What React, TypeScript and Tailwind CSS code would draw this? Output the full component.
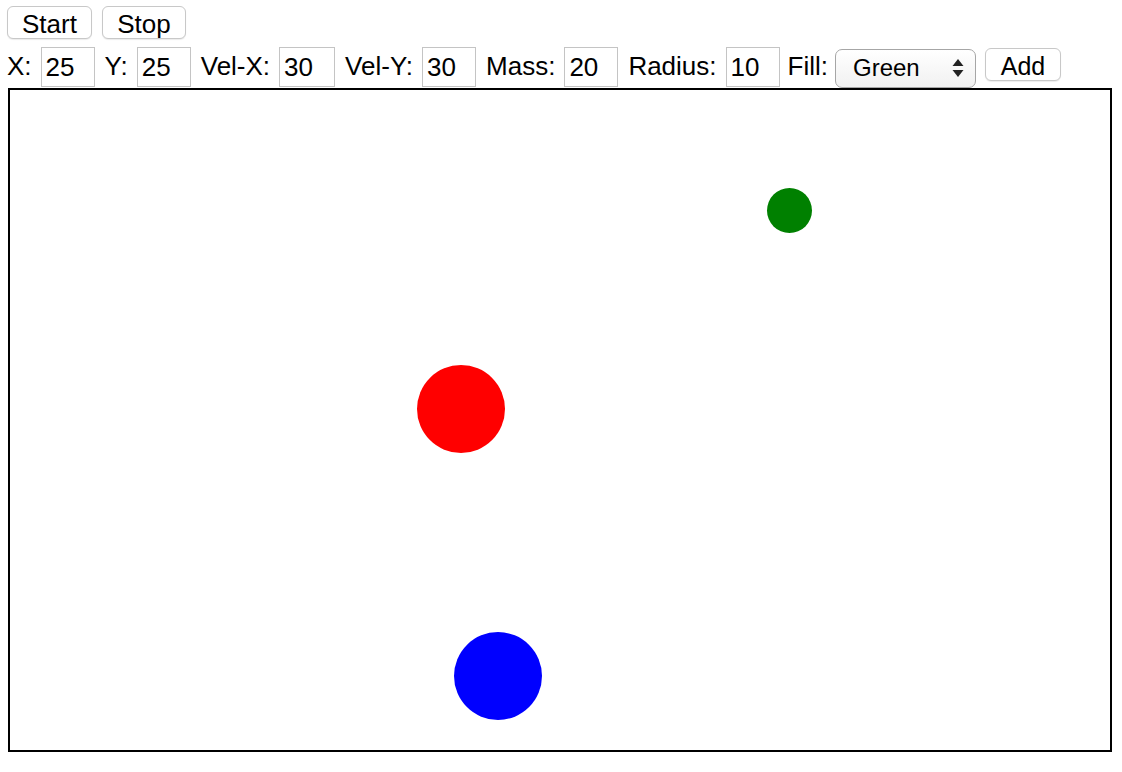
import React, { useState } from "react";

interface Ball {
  id: number;
  left: number;
  top: number;
  size: number;
  color: string;
}

const balls: Ball[] = [
  { id: 1, left: 757, top: 98, size: 45, color: "#008000" },
  { id: 2, left: 407, top: 275, size: 88, color: "#ff0000" },
  { id: 3, left: 444, top: 542, size: 88, color: "#0000ff" },
];

const fields = [
  { label: "X:", value: "25", width: "w-[54px]" },
  { label: "Y:", value: "25", width: "w-[54px]" },
  { label: "Vel-X:", value: "30", width: "w-[56px]" },
  { label: "Vel-Y:", value: "30", width: "w-[54px]" },
  { label: "Mass:", value: "20", width: "w-[54px]" },
  { label: "Radius:", value: "10", width: "w-[54px]" },
];

export default function App() {
  const [fill, setFill] = useState("Green");

  return (
    <div className="min-h-screen bg-white text-black font-['Liberation_Sans',Arial,sans-serif] text-[26px]">
      {/* Controls */}
      <div className="flex gap-[10px] pl-[7px] pt-[6px]">
        <button className="w-[85px] h-[33px] pt-[3px] rounded-[6px] border border-[#c8c8c8] bg-white leading-none shadow-[0_1px_1px_rgba(0,0,0,0.08)]">
          Start
        </button>
        <button className="w-[84px] h-[33px] pt-[3px] rounded-[6px] border border-[#c8c8c8] bg-white leading-none shadow-[0_1px_1px_rgba(0,0,0,0.08)]">
          Stop
        </button>
      </div>

      {/* Add form */}
      <div className="flex items-start h-[41px] mt-[8px] pl-[7px]">
        {fields.map((f) => (
          <React.Fragment key={f.label}>
            <span className="h-[40px] leading-[38px] mr-[9px]">{f.label}</span>
            <input
              defaultValue={f.value}
              className={`${f.width} h-[40px] mr-[10px] border border-[#c4c4c4] px-[4px] text-[26px] outline-none`}
            />
          </React.Fragment>
        ))}
        <span className="h-[40px] leading-[38px] -ml-[2px] mr-[7px]">Fill:</span>
        <div className="relative mt-[1px] mr-[9px]">
          <select
            value={fill}
            onChange={(e) => setFill(e.target.value)}
            className="appearance-none w-[141px] h-[39px] rounded-[7px] border border-[#a6a6a6] bg-gradient-to-b from-white to-[#f1f1f1] pl-[17px] text-[24px] leading-none outline-none"
          >
            <option>Red</option>
            <option>Green</option>
            <option>Blue</option>
          </select>
          <svg
            className="pointer-events-none absolute right-[12px] top-[11px]"
            width="12"
            height="18"
            viewBox="0 0 12 18"
          >
            <path d="M6 0 L11.5 7 L0.5 7 Z" fill="#222" />
            <path d="M6 18 L11.5 11 L0.5 11 Z" fill="#222" />
          </svg>
        </div>
        <button className="mt-[1px] w-[76px] h-[33px] pt-[3px] rounded-[6px] border border-[#c8c8c8] bg-white text-[25px] leading-none shadow-[0_1px_1px_rgba(0,0,0,0.08)]">
          Add
        </button>
      </div>

      {/* Canvas */}
      <div className="relative ml-[8px] w-[1104px] h-[664px] border-2 border-black bg-white">
        {balls.map((b) => (
          <div
            key={b.id}
            className="absolute rounded-full"
            style={{
              left: b.left,
              top: b.top,
              width: b.size,
              height: b.size,
              backgroundColor: b.color,
            }}
          />
        ))}
      </div>
    </div>
  );
}
